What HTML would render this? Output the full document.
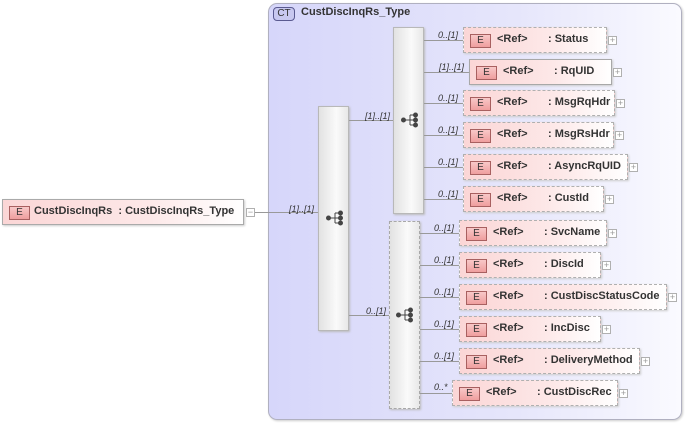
<!DOCTYPE html>
<html><head><meta charset="utf-8"><style>
*{margin:0;padding:0;box-sizing:border-box}
body{width:686px;height:423px;background:#fff;position:relative;overflow:hidden;font-family:"Liberation Sans",sans-serif}
.a{position:absolute}
.ct{left:268px;top:3px;width:414px;height:417px;border:1px solid #b0b0c0;border-radius:9px;background:linear-gradient(90deg,#d6d6fa 0%,#e6e6fb 60%,#fafaff 100%);box-shadow:1px 1px 2px #ccc}
.ctb{left:273px;top:7px;width:22px;height:14px;border:1px solid #5a5a90;border-radius:4px;background:#c8c8f0;font-size:10px;color:#333;text-align:center;line-height:12px}
.ctt{left:301px;top:6px;font-size:11px;font-weight:bold;color:#333}
.seq{width:31px;background:linear-gradient(90deg,#e2e2e2,#fafafa 60%,#e8e8e8);border:1px solid #b8b8b8;box-shadow:1px 1px 2px #bbb}
.seq.d{border:1px dashed #a8a8a8}
.el{height:26px;border:1px dashed #b0b0b0;background:linear-gradient(90deg,#fbd6d6,#fde8e8 60%,#fff);box-shadow:1px 1px 2px #ccc;font-size:11px;font-weight:bold;color:#333}
.el.s{border:1px solid #a8a8a8}
.eb{position:absolute;left:6px;top:6px;width:21px;height:14px;border:1px solid #a86060;background:linear-gradient(#f8c8c8,#ef9e9e);font-size:10px;font-weight:normal;text-align:center;line-height:12px;color:#333}
.rf{position:absolute;left:33px;top:5px}
.nm{position:absolute;left:84px;top:5px;white-space:nowrap}
.pl{width:9px;height:9px;border:1px solid #b0b0b0;background:#fff;font-size:9px;line-height:7px;text-align:center;color:#999}
.ln{height:1px;background:#999}
.lb{font-size:9px;font-style:italic;color:#333;white-space:nowrap}
</style></head><body>
<div class="a ct"></div>
<div class="a ctb">CT</div>
<div class="a ctt">CustDiscInqRs_Type</div>

<!-- main element -->
<div class="a el s" style="left:2px;top:199px;width:242px;border-color:#aaa">
<div class="eb">E</div><span class="rf" style="left:31px">CustDiscInqRs&nbsp; : CustDiscInqRs_Type</span></div>
<div class="a pl" style="left:246px;top:208px">−</div>
<div class="a ln" style="left:255px;top:212px;width:63px"></div>
<div class="a lb" style="left:289px;top:204px">[1]..[1]</div>

<!-- sequences -->
<div class="a seq" style="left:318px;top:106px;height:225px"></div>
<div class="a seq" style="left:393px;top:27px;height:187px"></div>
<div class="a seq d" style="left:389px;top:221px;height:188px"></div>

<svg class="a" style="left:326px;top:210px" width="18" height="16"><g fill="#444" stroke="#444"><circle cx="2.5" cy="8" r="2"/><line x1="3" y1="8" x2="9" y2="8"/><line x1="9" y1="3" x2="9" y2="13"/><line x1="9" y1="3" x2="14" y2="3"/><line x1="9" y1="8" x2="14" y2="8"/><line x1="9" y1="13" x2="14" y2="13"/><circle cx="14.5" cy="3" r="2"/><circle cx="14.5" cy="8" r="2"/><circle cx="14.5" cy="13" r="2"/></g></svg>
<svg class="a" style="left:401px;top:112px" width="18" height="16"><g fill="#444" stroke="#444"><circle cx="2.5" cy="8" r="2"/><line x1="3" y1="8" x2="9" y2="8"/><line x1="9" y1="3" x2="9" y2="13"/><line x1="9" y1="3" x2="14" y2="3"/><line x1="9" y1="8" x2="14" y2="8"/><line x1="9" y1="13" x2="14" y2="13"/><circle cx="14.5" cy="3" r="2"/><circle cx="14.5" cy="8" r="2"/><circle cx="14.5" cy="13" r="2"/></g></svg>
<svg class="a" style="left:396px;top:307px" width="18" height="16"><g fill="#444" stroke="#444"><circle cx="2.5" cy="8" r="2"/><line x1="3" y1="8" x2="9" y2="8"/><line x1="9" y1="3" x2="9" y2="13"/><line x1="9" y1="3" x2="14" y2="3"/><line x1="9" y1="8" x2="14" y2="8"/><line x1="9" y1="13" x2="14" y2="13"/><circle cx="14.5" cy="3" r="2"/><circle cx="14.5" cy="8" r="2"/><circle cx="14.5" cy="13" r="2"/></g></svg>

<div class="a ln" style="left:349px;top:120px;width:44px"></div>
<div class="a lb" style="left:365px;top:111px">[1]..[1]</div>
<div class="a ln" style="left:349px;top:315px;width:40px"></div>
<div class="a lb" style="left:366px;top:306px">0..[1]</div>

<!-- top group -->
<div class="a ln" style="left:424px;top:40px;width:39px"></div><div class="a lb" style="left:438px;top:30px">0..[1]</div>
<div class="a el" style="left:463px;top:27px;width:144px"><div class="eb">E</div><span class="rf">&lt;Ref&gt;</span><span class="nm">: Status</span></div>
<div class="a pl" style="left:608px;top:36px">+</div>

<div class="a ln" style="left:424px;top:72px;width:45px"></div><div class="a lb" style="left:439px;top:62px">[1]..[1]</div>
<div class="a el s" style="left:469px;top:59px;width:143px"><div class="eb">E</div><span class="rf">&lt;Ref&gt;</span><span class="nm">: RqUID</span></div>
<div class="a pl" style="left:613px;top:68px">+</div>

<div class="a ln" style="left:424px;top:103px;width:39px"></div><div class="a lb" style="left:438px;top:93px">0..[1]</div>
<div class="a el" style="left:463px;top:90px;width:152px"><div class="eb">E</div><span class="rf">&lt;Ref&gt;</span><span class="nm">: MsgRqHdr</span></div>
<div class="a pl" style="left:616px;top:99px">+</div>

<div class="a ln" style="left:424px;top:135px;width:39px"></div><div class="a lb" style="left:438px;top:125px">0..[1]</div>
<div class="a el" style="left:463px;top:122px;width:151px"><div class="eb">E</div><span class="rf">&lt;Ref&gt;</span><span class="nm">: MsgRsHdr</span></div>
<div class="a pl" style="left:615px;top:131px">+</div>

<div class="a ln" style="left:424px;top:167px;width:39px"></div><div class="a lb" style="left:438px;top:157px">0..[1]</div>
<div class="a el" style="left:463px;top:154px;width:165px"><div class="eb">E</div><span class="rf">&lt;Ref&gt;</span><span class="nm">: AsyncRqUID</span></div>
<div class="a pl" style="left:629px;top:163px">+</div>

<div class="a ln" style="left:424px;top:199px;width:39px"></div><div class="a lb" style="left:438px;top:189px">0..[1]</div>
<div class="a el" style="left:463px;top:186px;width:141px"><div class="eb">E</div><span class="rf">&lt;Ref&gt;</span><span class="nm">: CustId</span></div>
<div class="a pl" style="left:605px;top:195px">+</div>

<!-- bottom group -->
<div class="a ln" style="left:420px;top:233px;width:39px"></div><div class="a lb" style="left:434px;top:223px">0..[1]</div>
<div class="a el" style="left:459px;top:220px;width:148px"><div class="eb">E</div><span class="rf">&lt;Ref&gt;</span><span class="nm">: SvcName</span></div>
<div class="a pl" style="left:608px;top:229px">+</div>

<div class="a ln" style="left:420px;top:265px;width:39px"></div><div class="a lb" style="left:434px;top:255px">0..[1]</div>
<div class="a el" style="left:459px;top:252px;width:142px"><div class="eb">E</div><span class="rf">&lt;Ref&gt;</span><span class="nm">: DiscId</span></div>
<div class="a pl" style="left:602px;top:261px">+</div>

<div class="a ln" style="left:420px;top:297px;width:39px"></div><div class="a lb" style="left:434px;top:287px">0..[1]</div>
<div class="a el" style="left:459px;top:284px;width:208px"><div class="eb">E</div><span class="rf">&lt;Ref&gt;</span><span class="nm">: CustDiscStatusCode</span></div>
<div class="a pl" style="left:668px;top:293px">+</div>

<div class="a ln" style="left:420px;top:329px;width:39px"></div><div class="a lb" style="left:434px;top:319px">0..[1]</div>
<div class="a el" style="left:459px;top:316px;width:142px"><div class="eb">E</div><span class="rf">&lt;Ref&gt;</span><span class="nm">: IncDisc</span></div>
<div class="a pl" style="left:602px;top:325px">+</div>

<div class="a ln" style="left:420px;top:361px;width:39px"></div><div class="a lb" style="left:434px;top:351px">0..[1]</div>
<div class="a el" style="left:459px;top:348px;width:181px"><div class="eb">E</div><span class="rf">&lt;Ref&gt;</span><span class="nm">: DeliveryMethod</span></div>
<div class="a pl" style="left:641px;top:357px">+</div>

<div class="a ln" style="left:420px;top:393px;width:32px"></div><div class="a lb" style="left:434px;top:382px">0..*</div>
<div class="a el" style="left:452px;top:380px;width:166px"><div class="eb">E</div><span class="rf">&lt;Ref&gt;</span><span class="nm">: CustDiscRec</span></div>
<div class="a pl" style="left:619px;top:389px">+</div>
</body></html>
